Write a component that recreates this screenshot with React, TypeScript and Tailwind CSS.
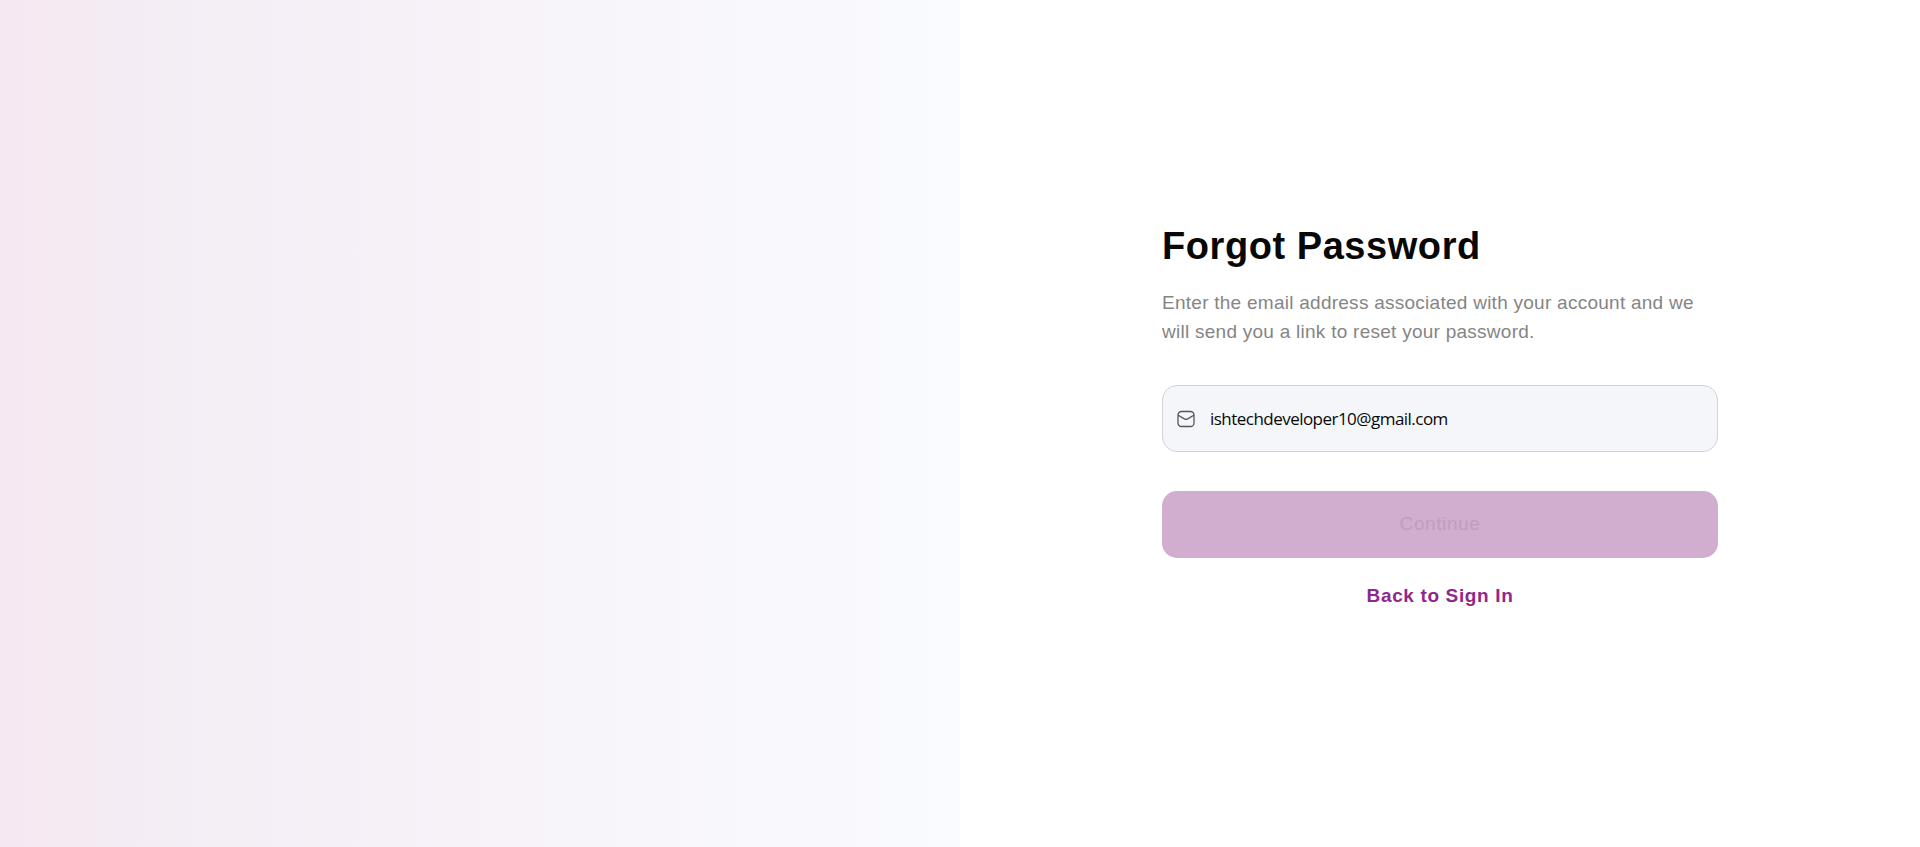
export default function App() {
  return (
    <main className="flex h-[847px] w-full overflow-hidden bg-white font-['Liberation_Sans',Arial,sans-serif]">
      <section className="h-full w-1/2 bg-[linear-gradient(90deg,#f5e8f2_0%,#f5eaf2_9%,#f3ecf4_12%,#f5f0f7_34%,#f7f3f9_53%,#f8f6fb_68%,#f9f9fd_85%,#fafbff_100%)]" />
      <section className="flex h-full w-1/2 justify-center">
        <div className="flex w-[556px] flex-col pt-[221px]">
          <h1 className="text-[38px] leading-[50px] font-bold tracking-[0.56px] text-[#080808]">Forgot Password</h1>
          <p className="mt-[17px] text-[19px] leading-[29px] tracking-[0.26px] text-[#858585]">
            Enter the email address associated with your account and we
            <br />
            will send you a link to reset your password.
          </p>
          <label className="mt-[39px] flex h-[67px] items-center rounded-[15px] border border-[#d1d3da] bg-[#f4f6fa] pl-[14px]">
            <svg className="h-[18px] w-[18px] shrink-0" viewBox="0 0 18 18" fill="none" stroke="#555" strokeWidth="1.3">
              <rect x="1" y="1.5" width="16" height="15" rx="3.6" />
              <path d="M1.2 5.2 7.4 8.9Q9 9.8 10.6 8.9L16.8 5.2" />
            </svg>
            <input
              className="ml-[15px] w-[480px] bg-transparent font-['Open_Sans',sans-serif] text-[17px] tracking-[-0.53px] text-[#080808] outline-none"
              type="email"
              defaultValue="ishtechdeveloper10@gmail.com"
            />
          </label>
          <button disabled className="mt-[39px] h-[67px] rounded-[15px] bg-[#d1adcf] text-[19px] tracking-[0.6px] text-[#bd9fbe]">
            Continue
          </button>
          <a href="#" className="mt-[23px] self-center text-[19px] leading-[29px] font-bold tracking-[0.64px] text-[#90278b]">
            Back to Sign In
          </a>
        </div>
      </section>
    </main>
  );
}
